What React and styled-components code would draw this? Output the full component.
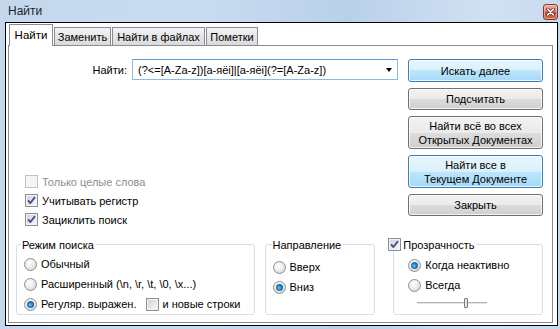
import React from "react"
import styled, { createGlobalStyle, css } from "styled-components"

const GlobalStyle = createGlobalStyle`
  html, body {
    margin: 0;
    padding: 0;
  }
  body {
    width: 560px;
    height: 329px;
    overflow: hidden;
    font-family: "Liberation Sans", Arial, sans-serif;
    font-size: 11px;
    color: #000;
  }
`

const Window = styled.div`
  width: 560px;
  height: 329px;
  display: flex;
  flex-direction: column;
  background: linear-gradient(90deg, #c4d8ed 0%, #c9dcf0 35%, #b9d0ea 62%, #d2e1f2 88%, #c7daee 100%);
`

const TitleBar = styled.div`
  height: 22px;
  flex: none;
  display: flex;
  align-items: center;
  justify-content: space-between;
  padding: 0 2px 0 8px;
`

const Title = styled.span`
  font-size: 12px;
  color: #1e1e1e;
  margin-top: -1px;
`

const CloseButton = styled.div`
  width: 15px;
  height: 16px;
  box-sizing: border-box;
  margin-top: 1px;
  border: 1px solid #7b3b2d;
  border-radius: 3px;
  background: linear-gradient(#eeb1a2 0%, #db8069 45%, #c64c31 52%, #d56a4b 100%);
  box-shadow: inset 0 0 0 1px rgba(255, 220, 210, 0.5);
  display: flex;
  align-items: center;
  justify-content: center;
`

const Client = styled.div`
  flex: 1;
  margin: 0 2px 3px 5px;
  border: 1px solid #000;
  background: #fff;
  padding: 1px 4px 2px 2px;
  display: flex;
  flex-direction: column;
`

const TabStrip = styled.div`
  height: 21px;
  flex: none;
  display: flex;
  align-items: flex-end;
  gap: 1px;
  padding-left: 1px;
`

const Tab = styled.div`
  box-sizing: border-box;
  width: ${p => p.$w}px;
  border: 1px solid #898c95;
  border-bottom: none;
  display: flex;
  align-items: center;
  justify-content: center;
  white-space: nowrap;
  ${p => p.$active
    ? css`
      height: 22px;
      margin-bottom: -1px;
      background: #fff;
      position: relative;
      z-index: 1;
      padding-bottom: 2px;
      font-size: 11.5px;
    `
    : css`
      height: 18px;
      background: linear-gradient(#f3f3f3 0%, #e6e6e6 50%, #dadada 100%);
    `}
`

const Panel = styled.div`
  flex: 1;
  border: 1px solid #898c95;
  padding: 13px 9px 0 7px;
  display: flex;
  flex-direction: column;
`

const TopArea = styled.div`
  display: grid;
  grid-template-columns: 1fr 135px;
  column-gap: 10px;
  align-items: start;
`

const LeftColumn = styled.div`
  display: flex;
  flex-direction: column;
`

const FindRow = styled.div`
  height: 21px;
  display: flex;
  align-items: center;
  justify-content: flex-end;
  gap: 5px;
`

const ComboBox = styled.div`
  width: 266px;
  height: 21px;
  box-sizing: border-box;
  border: 1px solid #8cbbe8;
  border-top-color: #5b9bd8;
  display: flex;
  align-items: center;
  justify-content: space-between;
  padding: 0 5px 0 5px;
  white-space: nowrap;
`

const Arrow = styled.span`
  width: 0;
  height: 0;
  border-left: 3.5px solid transparent;
  border-right: 3.5px solid transparent;
  border-top: 4px solid #000;
  margin-top: 1px;
`

const CheckList = styled.div`
  margin-top: 92px;
  padding-left: 9px;
  display: flex;
  flex-direction: column;
`

const Option = styled.label`
  height: ${p => p.$h || 18}px;
  display: flex;
  align-items: center;
  gap: 4px;
  white-space: nowrap;
  color: ${p => (p.$disabled ? "#8d8d8d" : "#000")};
`

const ButtonColumn = styled.div`
  display: flex;
  flex-direction: column;
  gap: 6px;
`

const Button = styled.div`
  height: ${p => p.$h}px;
  box-sizing: border-box;
  border: 1px solid ${p => (p.$blue ? "#3c7fb1" : "#707070")};
  border-radius: 3px;
  background: ${p => (p.$blue
    ? "linear-gradient(#eaf6fd 0%, #d9f0fc 50%, #bee6fd 50%, #a7d9f5 100%)"
    : "linear-gradient(#f2f2f2 0%, #ebebeb 50%, #dddddd 50%, #cfcfcf 100%)")};
  box-shadow: inset 0 0 0 1px rgba(255, 255, 255, 0.75);
  display: flex;
  align-items: center;
  justify-content: center;
  text-align: center;
  line-height: 14px;
`

const GroupRow = styled.div`
  margin-top: 15px;
  display: flex;
  gap: 10px;
`

const GroupBox = styled.div`
  position: relative;
  box-sizing: border-box;
  width: ${p => p.$w}px;
  height: 71px;
  margin-left: ${p => p.$ml || 0}px;
  border: 1px solid #d5dfe5;
  border-radius: 3px;
  padding: ${p => p.$pt}px 0 0 ${p => p.$pl}px;
  display: flex;
  flex-direction: column;
  gap: 2px;
`

const Legend = styled.div`
  position: absolute;
  top: -7px;
  left: ${p => p.$left}px;
  height: 13px;
  padding: 0 1px;
  background: #fff;
  display: flex;
  align-items: center;
  gap: 2px;
  white-space: nowrap;
`

const Radio = styled.span`
  width: 13px;
  height: 13px;
  flex: none;
  box-sizing: border-box;
  border-radius: 50%;
  border: 1px solid #8e8f8f;
  background: radial-gradient(circle at 40% 35%, #ffffff 0%, #f1f1f1 35%, #cfcfcf 100%);
  position: relative;
  ${p => p.$checked && css`
    &::after {
      content: "";
      position: absolute;
      left: 2px;
      top: 2px;
      width: 7px;
      height: 7px;
      border-radius: 50%;
      background: radial-gradient(circle at 45% 55%, #7fd0fa 0%, #2a86c9 35%, #0e3d70 100%);
    }
  `}
`

const Box = styled.span`
  width: 13px;
  height: 13px;
  flex: none;
  box-sizing: border-box;
  border: 1px solid ${p => (p.$disabled ? "#c2c2c2" : "#8e8f8f")};
  background: ${p => (p.$disabled ? "#f4f4f4" : "linear-gradient(135deg, #cfd2d6 0%, #f8f8f8 100%)")};
  box-shadow: inset 0 0 0 1px ${p => (p.$disabled ? "#f7f7f7" : "#f3f3f3")};
  display: flex;
  align-items: center;
  justify-content: center;
`

const NestedCheck = styled.span`
  display: flex;
  align-items: center;
  gap: 3px;
  margin-left: 6px;
`

const Slider = styled.div`
  position: relative;
  width: 70px;
  height: 12px;
  margin: 1px 0 0 9px;
  &::before {
    content: "";
    position: absolute;
    left: 0;
    right: 0;
    top: 5px;
    height: 1px;
    background: #b4b4b4;
    border-bottom: 1px solid #e6e6e6;
  }
`

const Thumb = styled.span`
  position: absolute;
  left: ${p => p.$pos}px;
  top: 1px;
  width: 4px;
  height: 10px;
  box-sizing: border-box;
  border: 1px solid #7a7a7a;
  border-radius: 1px;
  background: linear-gradient(90deg, #f4f4f4, #d8d8d8);
`

const Check = () => (
  <svg width="9" height="9" viewBox="0 0 9 9">
    <path d="M1 4.4 L3.4 7 L8 1.2" fill="none" stroke="#40529a" strokeWidth="1.9" strokeLinejoin="round" />
  </svg>
)

const CheckBox = ({ checked, disabled }) => (
  <Box $disabled={disabled}>{checked && <Check />}</Box>
)

const CloseIcon = () => (
  <svg width="9" height="8" viewBox="0 0 9 8">
    <path d="M1.5 1 L7.5 7 M7.5 1 L1.5 7" stroke="#6a2a1e" strokeWidth="3" strokeLinecap="round" />
    <path d="M1.5 1 L7.5 7 M7.5 1 L1.5 7" stroke="#fff" strokeWidth="1.6" strokeLinecap="round" />
  </svg>
)

const tabs = [
  { label: "Найти", w: 44, active: true },
  { label: "Заменить", w: 57 },
  { label: "Найти в файлах", w: 93 },
  { label: "Пометки", w: 52 },
]

const buttons = [
  { label: ["Искать далее"], h: 23, blue: true },
  { label: ["Подсчитать"], h: 22 },
  { label: ["Найти всё во всех", "Открытых Документах"], h: 33 },
  { label: ["Найти все в", "Текущем Документе"], h: 33, blue: true },
  { label: ["Закрыть"], h: 22 },
]

export default function App() {
  return (
    <>
      <GlobalStyle />
      <Window>
        <TitleBar>
          <Title>Найти</Title>
          <CloseButton><CloseIcon /></CloseButton>
        </TitleBar>
        <Client>
          <TabStrip>
            {tabs.map(t => (
              <Tab key={t.label} $w={t.w} $active={t.active}>{t.label}</Tab>
            ))}
          </TabStrip>
          <Panel>
            <TopArea>
              <LeftColumn>
                <FindRow>
                  <span>Найти:</span>
                  <ComboBox>
                    <span>(?&lt;=[A-Za-z])[а-яёі]|[а-яёі](?=[A-Za-z])</span>
                    <Arrow />
                  </ComboBox>
                </FindRow>
                <CheckList>
                  <Option $h={19} $disabled><CheckBox disabled />Только целые слова</Option>
                  <Option $h={19}><CheckBox checked />Учитывать регистр</Option>
                  <Option $h={19}><CheckBox checked />Зациклить поиск</Option>
                </CheckList>
              </LeftColumn>
              <ButtonColumn>
                {buttons.map(b => (
                  <Button key={b.label[0]} $h={b.h} $blue={b.blue}>
                    <div>{b.label.map((l, i) => <div key={i}>{l}</div>)}</div>
                  </Button>
                ))}
              </ButtonColumn>
            </TopArea>
            <GroupRow>
              <GroupBox $w={239} $pt={10} $pl={7}>
                <Legend $left={4}>Режим поиска</Legend>
                <Option><Radio />Обычный</Option>
                <Option><Radio />Расширенный (\n, \r, \t, \0, \x...)</Option>
                <Option>
                  <Radio $checked />Регуляр. выражен.
                  <NestedCheck><CheckBox />и новые строки</NestedCheck>
                </Option>
              </GroupBox>
              <GroupBox $w={111} $pt={13} $pl={7}>
                <Legend $left={6}>Направление</Legend>
                <Option><Radio />Вверх</Option>
                <Option><Radio $checked />Вниз</Option>
              </GroupBox>
              <GroupBox $w={150} $pt={11} $pl={14} $ml={8}>
                <Legend $left={-7}><CheckBox checked />Прозрачность</Legend>
                <Option><Radio $checked />Когда неактивно</Option>
                <Option><Radio />Всегда</Option>
                <Slider><Thumb $pos={47} /></Slider>
              </GroupBox>
            </GroupRow>
          </Panel>
        </Client>
      </Window>
    </>
  )
}
